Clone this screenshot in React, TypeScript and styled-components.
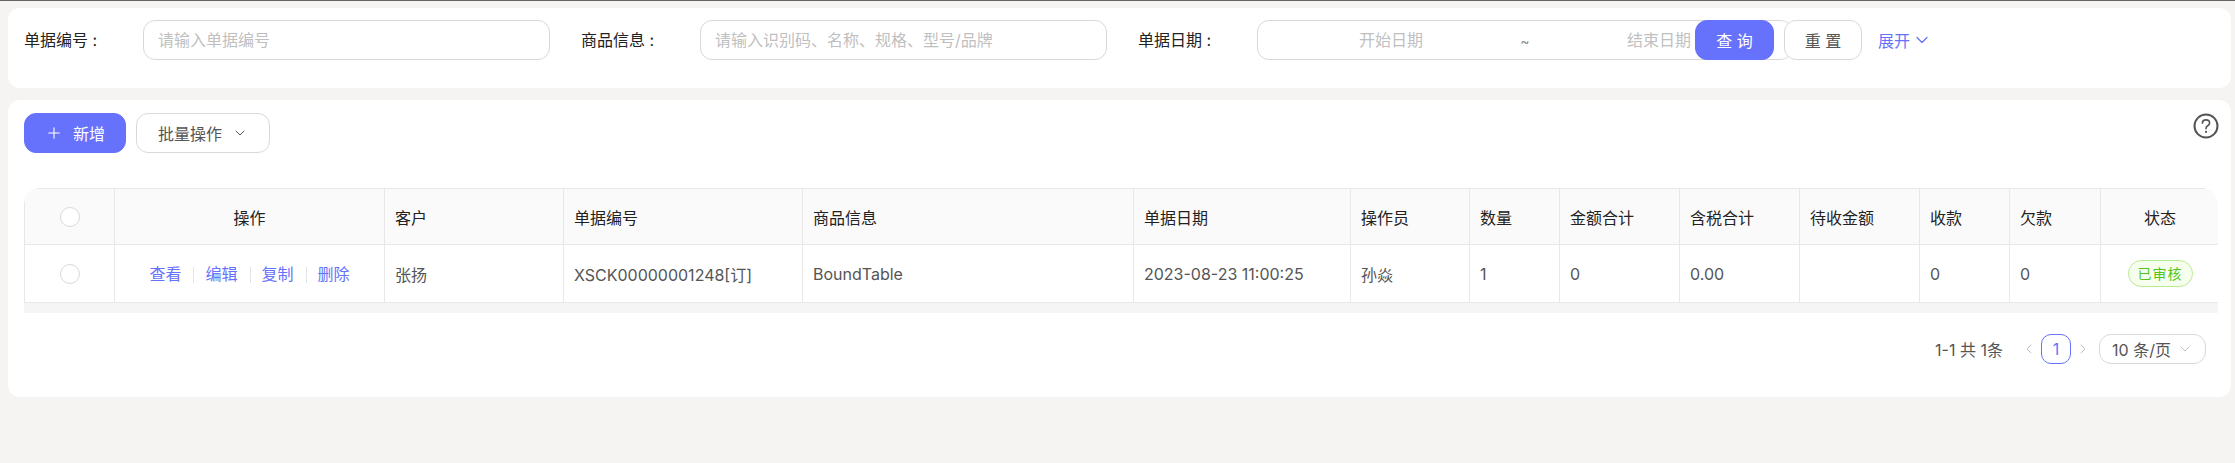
import React from 'react';
import styled, { createGlobalStyle } from 'styled-components';
import { Plus, ChevronDown, ChevronLeft, ChevronRight } from 'lucide-react';

const primary = '#6672fb';

const columns = [
  { title: '', width: 90, center: true },
  { title: '操作', width: 270, center: true },
  { title: '客户', width: 179 },
  { title: '单据编号', width: 239 },
  { title: '商品信息', width: 331 },
  { title: '单据日期', width: 217 },
  { title: '操作员', width: 119 },
  { title: '数量', width: 90 },
  { title: '金额合计', width: 120 },
  { title: '含税合计', width: 120 },
  { title: '待收金额', width: 120 },
  { title: '收款', width: 90 },
  { title: '欠款', width: 91 },
  { title: '状态', width: 119, center: true },
];

const App: React.FC = () => {
  return (
    <>
      <GlobalStyle />
      <TopLine />
      <Page>
        <SearchCard>
          <Field>
            <Label>单据编号 :</Label>
            <TextInput placeholder="请输入单据编号" />
          </Field>
          <Field>
            <Label>商品信息 :</Label>
            <TextInput placeholder="请输入识别码、名称、规格、型号/品牌" />
          </Field>
          <Field>
            <Label>单据日期 :</Label>
            <RangeBox>
              <RangeInput placeholder="开始日期" />
              <RangeSplit>~</RangeSplit>
              <RangeInput placeholder="结束日期" />
            </RangeBox>
          </Field>
          <SearchActions>
            <Button $primary $width={79}>查 询</Button>
            <Button $width={78}>重 置</Button>
            <Expand>
              展开
              <ChevronDown size={20} strokeWidth={1.5} />
            </Expand>
          </SearchActions>
        </SearchCard>
        <TableCard>
          <Toolbar>
            <Button $primary $width={102}>
              <Plus size={18} strokeWidth={1.5} />
              新增
            </Button>
            <Button $width={134}>
              批量操作
              <ChevronDown size={16} strokeWidth={1.5} />
            </Button>
            <HelpIcon width="26" height="26" viewBox="0 0 26 26" fill="none">
              <circle cx="13" cy="13" r="11.5" stroke="#555" strokeWidth="2" />
              <path
                d="M9.4 10.2c0-2 1.6-3.3 3.6-3.3s3.6 1.3 3.6 3.1c0 1.4-.8 2.1-1.9 2.8-1 .6-1.6 1.2-1.6 2.4v.6"
                stroke="#555"
                strokeWidth="1.6"
                strokeLinecap="round"
              />
              <circle cx="13" cy="18.9" r="1.1" fill="#555" />
            </HelpIcon>
          </Toolbar>
          <TableWrap>
            <Table>
              <colgroup>
                {columns.map((c, i) => (
                  <Col key={i} $width={c.width} />
                ))}
              </colgroup>
              <thead>
                <tr>
                  {columns.map((c, i) => (
                    <Th key={i} $center={c.center}>
                      {i === 0 ? <Radio /> : c.title}
                    </Th>
                  ))}
                </tr>
              </thead>
              <tbody>
                <tr>
                  <Td $center>
                    <Radio />
                  </Td>
                  <Td $center>
                    <RowActions>
                      <ActionLink>查看</ActionLink>
                      <ActionLink>编辑</ActionLink>
                      <ActionLink>复制</ActionLink>
                      <ActionLink>删除</ActionLink>
                    </RowActions>
                  </Td>
                  <Td>张扬</Td>
                  <Td>XSCK00000001248[订]</Td>
                  <Td>BoundTable</Td>
                  <Td>2023-08-23 11:00:25</Td>
                  <Td>孙焱</Td>
                  <Td>1</Td>
                  <Td>0</Td>
                  <Td>0.00</Td>
                  <Td />
                  <Td>0</Td>
                  <Td>0</Td>
                  <Td $center>
                    <StatusTag>已审核</StatusTag>
                  </Td>
                </tr>
              </tbody>
            </Table>
            <ScrollTrack />
          </TableWrap>
          <Pagination>
            <Total>1-1 共 1条</Total>
            <PageArrow>
              <ChevronLeft size={16} strokeWidth={1.5} />
            </PageArrow>
            <PageNumber>1</PageNumber>
            <PageArrow>
              <ChevronRight size={16} strokeWidth={1.5} />
            </PageArrow>
            <PageSize>
              10 条/页
              <ChevronDown size={16} strokeWidth={1.5} />
            </PageSize>
          </Pagination>
        </TableCard>
      </Page>
    </>
  );
};

const GlobalStyle = createGlobalStyle`
  html, body {
    margin: 0;
    padding: 0;
    height: 100%;
    background: #f5f4f2;
    overflow: hidden;
  }
  body {
    font-family: Inter, "Noto Sans CJK SC", sans-serif;
    font-size: 16px;
    color: #555;
  }
`;

const TopLine = styled.div`
  height: 1px;
  background: #666;
`;

const Page = styled.div`
  display: flex;
  flex-direction: column;
  gap: 12px;
  padding: 7px 4px 0 8px;
`;

const SearchCard = styled.div`
  display: flex;
  gap: 31px;
  height: 80px;
  box-sizing: border-box;
  padding: 12px 16px;
  background: #fff;
  border-radius: 12px;
`;

const Field = styled.div`
  display: flex;
  align-items: flex-start;
  width: 526px;
`;

const Label = styled.label`
  flex: 0 0 119px;
  line-height: 40px;
  color: #222;
`;

const TextInput = styled.input`
  flex: 1;
  min-width: 0;
  height: 40px;
  box-sizing: border-box;
  padding: 0 14px;
  border: 1px solid #d9d9d9;
  border-radius: 12px;
  outline: none;
  font: inherit;
  color: #555;

  &::placeholder {
    color: #bfbfbf;
  }
`;

const RangeBox = styled.div`
  flex: 1;
  display: flex;
  align-items: center;
  height: 40px;
  box-sizing: border-box;
  padding: 0 7px;
  border: 1px solid #d9d9d9;
  border-radius: 12px;
`;

const RangeInput = styled.input`
  flex: 1;
  min-width: 0;
  border: 0;
  outline: none;
  background: none;
  text-align: center;
  font: inherit;

  &::placeholder {
    color: #bfbfbf;
  }
`;

const RangeSplit = styled.span`
  flex: 0 0 16px;
  text-align: center;
  color: #888;
  font-size: 14px;
`;

const SearchActions = styled.div`
  display: flex;
  align-items: center;
  height: 40px;
  gap: 10px;
`;

const Button = styled.button<{ $primary?: boolean; $width: number }>`
  display: inline-flex;
  align-items: center;
  justify-content: center;
  gap: 10px;
  width: ${(p) => p.$width}px;
  height: 40px;
  box-sizing: border-box;
  padding: 0;
  border: 1px solid ${(p) => (p.$primary ? primary : '#d9d9d9')};
  border-radius: 12px;
  background: ${(p) => (p.$primary ? primary : '#fff')};
  color: ${(p) => (p.$primary ? '#fff' : '#555')};
  font: inherit;
  cursor: pointer;
`;

const Expand = styled.a`
  display: inline-flex;
  align-items: center;
  gap: 2px;
  margin-left: 6px;
  color: ${primary};
  cursor: pointer;
`;

const TableCard = styled.div`
  height: 297px;
  box-sizing: border-box;
  padding: 13px 16px 0;
  background: #fff;
  border-radius: 12px;
`;

const Toolbar = styled.div`
  position: relative;
  display: flex;
  gap: 10px;
  height: 40px;
  margin-bottom: 35px;
`;

const HelpIcon = styled.svg`
  position: absolute;
  top: 0;
  right: -4px;
`;

const TableWrap = styled.div`
  overflow: hidden;
  width: 2194px;
  border-radius: 16px 16px 0 0;
`;

const Table = styled.table`
  table-layout: fixed;
  width: 100%;
  border-collapse: separate;
  border-spacing: 0;
  border-top: 1px solid #e8e8e8;
  border-left: 1px solid #e8e8e8;
  border-top-left-radius: 16px;
  border-top-right-radius: 16px;
`;

const Col = styled.col<{ $width: number }>`
  width: ${(p) => p.$width}px;
`;

const Th = styled.th<{ $center?: boolean }>`
  height: 56px;
  box-sizing: border-box;
  padding: 0 10px;
  background: #fafafa;
  border-right: 1px solid #e8e8e8;
  border-bottom: 1px solid #e8e8e8;
  text-align: ${(p) => (p.$center ? 'center' : 'left')};
  font-weight: 400;
  color: #222;
`;

const Td = styled.td<{ $center?: boolean }>`
  height: 58px;
  box-sizing: border-box;
  padding: 0 10px;
  border-right: 1px solid #e8e8e8;
  border-bottom: 1px solid #e8e8e8;
  text-align: ${(p) => (p.$center ? 'center' : 'left')};
  color: #555;
`;

const Radio = styled.span`
  display: inline-block;
  vertical-align: middle;
  width: 20px;
  height: 20px;
  box-sizing: border-box;
  border: 1px solid #d9d9d9;
  border-radius: 50%;
  background: #fff;
`;

const RowActions = styled.div`
  display: flex;
  justify-content: center;
`;

const ActionLink = styled.a`
  position: relative;
  padding: 0 12px;
  line-height: 20px;
  color: ${primary};
  cursor: pointer;

  & + &::before {
    content: '';
    position: absolute;
    left: 0;
    top: 3px;
    width: 1px;
    height: 16px;
    background: #e4e4e4;
  }
`;

const StatusTag = styled.span`
  display: inline-block;
  box-sizing: border-box;
  width: 65px;
  height: 27px;
  line-height: 25px;
  border: 1px solid #b7eb8f;
  border-radius: 14px;
  background: #f6ffed;
  color: #52c41a;
  font-size: 14px;
  letter-spacing: 1px;
  vertical-align: middle;
`;

const ScrollTrack = styled.div`
  height: 10px;
  background: #f5f5f5;
`;

const Pagination = styled.div`
  display: flex;
  align-items: center;
  justify-content: flex-end;
  height: 30px;
  margin-top: 21px;
  padding-right: 9px;
  color: #555;
`;

const Total = styled.span`
  margin-right: 14px;
`;

const PageArrow = styled.span`
  display: flex;
  align-items: center;
  justify-content: center;
  width: 24px;
  color: #bfbfbf;
`;

const PageNumber = styled.span`
  width: 30px;
  height: 30px;
  box-sizing: border-box;
  line-height: 28px;
  text-align: center;
  border: 1px solid ${primary};
  border-radius: 10px;
  color: ${primary};
`;

const PageSize = styled.span`
  display: flex;
  align-items: center;
  justify-content: center;
  gap: 6px;
  width: 107px;
  height: 30px;
  box-sizing: border-box;
  margin-left: 4px;
  border: 1px solid #d9d9d9;
  border-radius: 12px;

  svg {
    color: #bfbfbf;
  }
`;

export default App;
